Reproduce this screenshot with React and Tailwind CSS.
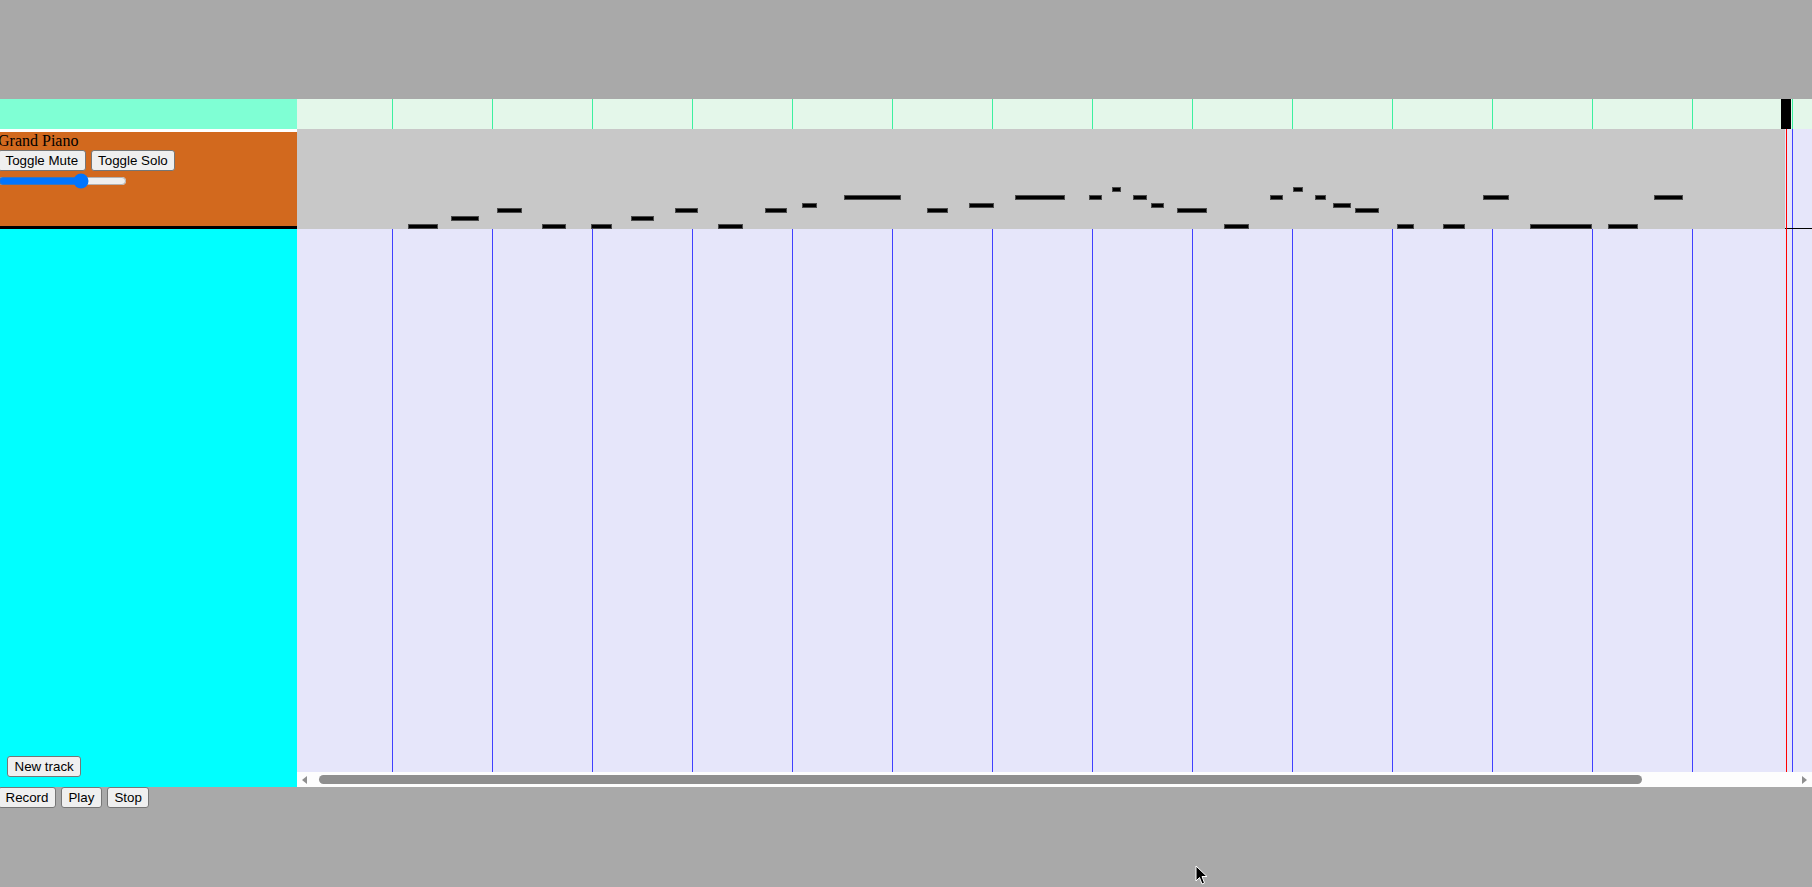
import React from 'react';

// [left, width, pitch step] relative to the lane
const notes = [
  [111.3, 29.7, 0], [154, 28, 2], [200, 24.7, 4], [245, 24, 0], [293.7, 21.3, 0],
  [334, 23, 2], [378, 22.7, 4], [421, 25, 0], [467.7, 22.3, 4], [505, 15, 5],
  [547, 56.7, 7], [630.3, 20.4, 4], [672, 25.3, 5], [718, 50, 7], [792, 12.7, 7],
  [814.7, 9.6, 9], [836.3, 13.4, 7], [854.3, 12.7, 5], [880.3, 29.7, 4], [927, 24.7, 0],
  [973, 13, 7], [996, 9.7, 9], [1017.7, 11, 7], [1036.3, 17.4, 5], [1058.3, 23.7, 4],
  [1100, 17, 0], [1146, 22.3, 0], [1186.3, 25.7, 7], [1233.3, 61.7, 0], [1311.3, 29.7, 0],
  [1357.3, 28.7, 7],
];

const cells = Array.from({ length: 15 }, (_, i) => i);

const btn = "inline-flex items-center h-[21px] bg-[#efefef] border border-[#767676] rounded-[3px] px-[6.5px] text-[13.33px] text-black font-['Liberation_Sans',Arial,sans-serif]";

function GridLines({ color }) {
    return (
        <div className="flex h-full">
            <div className="w-[95px] shrink-0" />
            {cells.map(i => (
                <div key={i} className={`w-[100px] shrink-0 h-full border-l ${color}`} />
            ))}
        </div>
    );
}

export default function App() {
    return (
        <div className="relative min-h-[887px] bg-[#a9a9a9] overflow-hidden font-['Liberation_Serif',serif]">
            <div className="h-[99px]" />

            <div className="flex h-[688px]">
                {/* track headers */}
                <div className="w-[297px] shrink-0 flex flex-col">
                    <div className="h-[30px] bg-[#7fffd4]" />
                    <div className="h-[3px] bg-white" />
                    <div className="h-[94px] bg-[#d2691e] -ml-[2px] overflow-hidden">
                        <div className="text-[16px] leading-[18px] text-black">Grand Piano</div>
                        <div className="flex gap-[5px] h-[21px]">
                            <button className={btn}>Toggle Mute</button>
                            <button className={btn}>Toggle Solo</button>
                        </div>
                        <div className="h-[20px] flex items-center">
                            <input type="range" min="0" max="150" defaultValue="100" className="w-[129px] h-[16px]" />
                        </div>
                    </div>
                    <div className="h-[3px] bg-black" />
                    <div className="flex-1 bg-[#00ffff] flex flex-col justify-end pb-[10px] pl-[7px]">
                        <div className="flex">
                            <button className={btn}>New track</button>
                        </div>
                    </div>
                </div>

                {/* timeline */}
                <div className="flex-1 flex flex-col min-w-0">
                    <div className="relative h-[30px] bg-[#e4f7ea] overflow-hidden">
                        <GridLines color="border-[#3cf0a0]" />
                        <div className="absolute top-0 left-[1484px] w-[10px] h-full bg-black" />
                    </div>
                    <div className="relative h-[643px] bg-[#e6e6fa] overflow-hidden">
                        <GridLines color="border-[#4040ff]" />
                        <div className="absolute top-0 left-0 w-[1488px] h-[100px] bg-[#c8c8c8]">
                            {notes.map(([l, w, k], i) => (
                                <div
                                    key={i}
                                    className="absolute h-[5px] bg-black border border-[#4a4a4a]"
                                    style={{ left: l, width: w, top: 95.33 - 4.1667 * k }}
                                />
                            ))}
                        </div>
                        <div className="absolute top-[99px] left-[1488px] right-0 h-px bg-black" />
                        <div className="absolute top-0 bottom-0 left-[1489px] w-px bg-[#ff0000]" />
                    </div>
                    <div className="h-[15px] bg-[#fdfdfd] flex items-center">
                        <div className="w-[15px] h-full flex items-center justify-center">
                            <svg width="6" height="8" viewBox="0 0 6 8"><polygon points="5,0 5,8 0,4" fill="#8f8f8f" /></svg>
                        </div>
                        <div className="flex-1 h-full flex items-center">
                            <div className="ml-[7px] w-[1323px] h-[9px] rounded-full bg-[#8f8f8f]" />
                        </div>
                        <div className="w-[15px] h-full flex items-center justify-center">
                            <svg width="6" height="8" viewBox="0 0 6 8"><polygon points="0,0 0,8 5,4" fill="#8f8f8f" /></svg>
                        </div>
                    </div>
                </div>
            </div>

            <div className="flex gap-[5px] -ml-[2px] h-[21px]">
                <button className={btn}>Record</button>
                <button className={btn}>Play</button>
                <button className={btn}>Stop</button>
            </div>

            {/* mouse pointer */}
            <svg className="absolute left-[1195px] top-[865px]" width="13" height="21" viewBox="0 0 13 21">
                <path d="M1 1 L1 16 L4.5 12.5 L7 19 L9.5 18 L7 11.5 L12 11.5 Z" fill="black" stroke="white" strokeWidth="1" />
            </svg>
        </div>
    );
}
